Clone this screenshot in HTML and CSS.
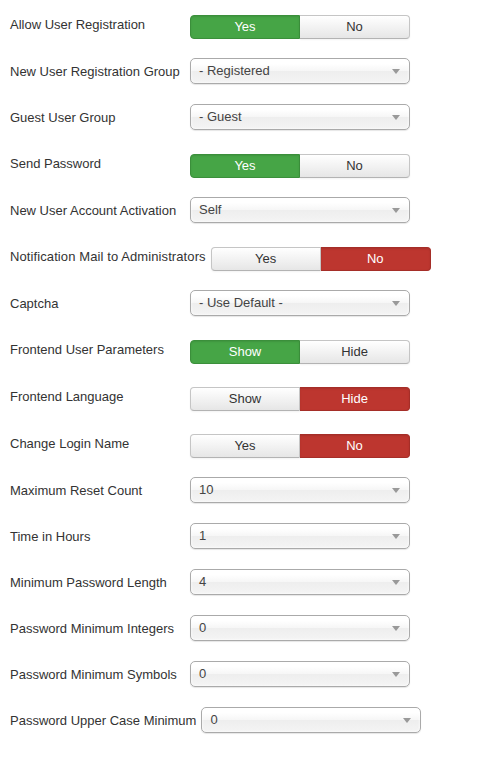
FILE: index.html
```html
<!DOCTYPE html>
<html>
<head>
<meta charset="utf-8">
<link rel="stylesheet" href="styles.css">
</head>
<body>
<div class="form">
  <div class="row row-btn"><label class="lbl">Allow User Registration</label>
    <div class="btn-group"><span class="btn on-green">Yes</span><span class="btn">No</span></div></div>
  <div class="row"><label class="lbl">New User Registration Group</label>
    <div class="select">- Registered<i class="arrow"></i></div></div>
  <div class="row"><label class="lbl">Guest User Group</label>
    <div class="select">- Guest<i class="arrow"></i></div></div>
  <div class="row row-btn"><label class="lbl">Send Password</label>
    <div class="btn-group"><span class="btn on-green">Yes</span><span class="btn">No</span></div></div>
  <div class="row"><label class="lbl">New User Account Activation</label>
    <div class="select">Self<i class="arrow"></i></div></div>
  <div class="row row-btn"><label class="lbl lbl-wide">Notification Mail to Administrators</label>
    <div class="btn-group"><span class="btn">Yes</span><span class="btn on-red">No</span></div></div>
  <div class="row"><label class="lbl">Captcha</label>
    <div class="select">- Use Default -<i class="arrow"></i></div></div>
  <div class="row row-btn"><label class="lbl">Frontend User Parameters</label>
    <div class="btn-group"><span class="btn on-green">Show</span><span class="btn">Hide</span></div></div>
  <div class="row row-btn"><label class="lbl">Frontend Language</label>
    <div class="btn-group"><span class="btn">Show</span><span class="btn on-red">Hide</span></div></div>
  <div class="row row-btn"><label class="lbl">Change Login Name</label>
    <div class="btn-group"><span class="btn">Yes</span><span class="btn on-red">No</span></div></div>
  <div class="row"><label class="lbl">Maximum Reset Count</label>
    <div class="select">10<i class="arrow"></i></div></div>
  <div class="row"><label class="lbl">Time in Hours</label>
    <div class="select">1<i class="arrow"></i></div></div>
  <div class="row"><label class="lbl">Minimum Password Length</label>
    <div class="select">4<i class="arrow"></i></div></div>
  <div class="row"><label class="lbl">Password Minimum Integers</label>
    <div class="select">0<i class="arrow"></i></div></div>
  <div class="row"><label class="lbl">Password Minimum Symbols</label>
    <div class="select">0<i class="arrow"></i></div></div>
  <div class="row"><label class="lbl">Password Upper Case Minimum</label>
    <div class="select">0<i class="arrow"></i></div></div>
</div>
</body>
</html>
```
FILE: styles.css
```css
html, body {
  margin: 0;
  padding: 0;
  background: #fff;
}
body {
  font-family: "Liberation Sans", Arial, Helvetica, sans-serif;
  font-size: 13px;
  color: #333;
}
.form {
  padding: 11px 10px 0 10px;
  display: flex;
  flex-direction: column;
}
.row {
  display: flex;
  align-items: flex-start;
  height: 46px;
}
.row-btn {
  height: 47px;
}
.lbl {
  min-width: 175px;
  padding-top: 5px;
  padding-right: 5px;
  line-height: 18px;
  white-space: nowrap;
}
.lbl-wide {
  letter-spacing: 0.1px;
}
.btn-group {
  display: flex;
  margin-top: 4px;
}
.btn {
  box-sizing: border-box;
  width: 110px;
  height: 24px;
  line-height: 22px;
  text-align: center;
  color: #333;
  border: 1px solid #c5c5c5;
  border-bottom-color: #b3b3b3;
  background: linear-gradient(#ffffff, #e6e6e6);
  box-shadow: 0 1px 2px rgba(0,0,0,0.05);
}
.btn:first-child {
  border-radius: 4px 0 0 4px;
}
.btn:last-child {
  border-radius: 0 4px 4px 0;
  border-left: none;
}
.btn.on-green {
  background: #46a546;
  border-color: #3b8f3b;
  color: #fff;
  box-shadow: inset 0 1px 2px rgba(0,0,0,0.1);
}
.btn.on-red {
  background: #bd362f;
  border-color: #a52e28;
  color: #fff;
  box-shadow: inset 0 1px 2px rgba(0,0,0,0.1);
}
.select {
  box-sizing: border-box;
  position: relative;
  width: 220px;
  height: 26px;
  line-height: 24px;
  padding-left: 8px;
  border: 1px solid #aaa;
  border-radius: 5px;
  background: linear-gradient(#fff 20%, #f6f6f6 50%, #eee 52%, #f4f4f4 100%);
  box-shadow: inset 0 0 3px #fff, 0 1px 1px rgba(0,0,0,0.1);
  color: #444;
}
.arrow {
  position: absolute;
  right: 9px;
  top: 10px;
  width: 0;
  height: 0;
  border-left: 4px solid transparent;
  border-right: 4px solid transparent;
  border-top: 5px solid #999;
}
```
